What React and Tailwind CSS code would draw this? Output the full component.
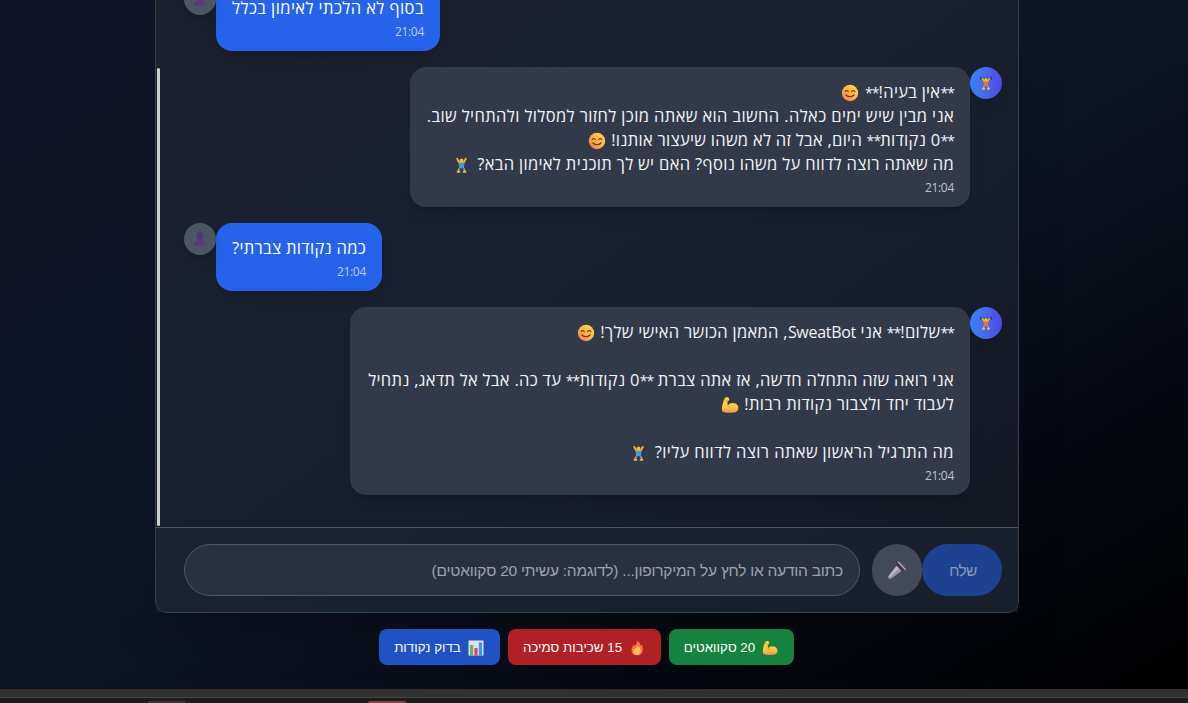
function Lifter({ shirt, className }) {
  return (
    <svg viewBox="0 0 20 20" className={className}>
      <path d="M2 3h16" stroke="#31333f" strokeWidth="1" />
      <path d="M2.5 1v4M17.5 1v4" stroke="#343644" strokeWidth="2" />
      <path d="M4.500 2.500l3 5.500h5l3-5.500" fill="none" stroke="#f6b51d" strokeWidth="2.200" />
      <circle cx="10" cy="5.200" r="2.300" fill="#f8bd2e" />
      <path d="M6.500 8h7l-.6 6.500H7.100z" fill={shirt} />
      <path d="M7.500 14.500l-1.500 3M12.500 14.500l1.500 3" stroke="#a3a7c4" strokeWidth="2" />
      <path d="M4.500 18.500h4M11.500 18.500h4" stroke="#f2b72f" strokeWidth="2.400" />
    </svg>
  )
}

function InlineLifter() {
  return <Lifter shirt="#429bdc" className="mr-[3px] inline-block size-[17px] align-[-3px]" />
}

function Smile() {
  return (
    <svg viewBox="0 0 18 18" className="mr-px inline-block size-[18px] align-[-4px]">
      <defs>
        <linearGradient id="face" x1="1" y1="0" x2="0" y2="1">
          <stop stopColor="#ffe04a" />
          <stop offset=".55" stopColor="#ffad3c" />
          <stop offset="1" stopColor="#ef6f62" />
        </linearGradient>
      </defs>
      <circle cx="9" cy="9" r="8.200" fill="url(#face)" />
      <path d="M4.200 7.500q1.500-2 3 0M10.800 7.500q1.500-2 3 0M5 11q4 3.500 8 0" fill="none" stroke="#59351f" strokeWidth="1.200" strokeLinecap="round" />
    </svg>
  )
}

function Muscle({ className }) {
  return (
    <svg viewBox="0 0 18 18" className={className}>
      <defs>
        <linearGradient id="arm" x1="0" y1="0" x2="0" y2="1">
          <stop stopColor="#ffd23e" />
          <stop offset=".65" stopColor="#ffc642" />
          <stop offset="1" stopColor="#f08d50" />
        </linearGradient>
      </defs>
      <path d="M3 3.200C4 1 7 .600 8 2.200c.500 1.200-.200 2.800-1.600 3.100l.4 4.200c.8-1.200 1.900-2 3.400-2.300C13 6.600 16 7.500 17 10c1 3.600-.5 6.200-4 6.500-4 .5-8 .7-11-.8C.200 14.500 1 11 1.500 8.500z" fill="url(#arm)" />
      <path d="M6.500 10q1.300 0 2.800 1.500M3.500 3.500l3 1.300" fill="none" stroke="#dc8436" strokeWidth=".8" />
    </svg>
  )
}

function Person() {
  return (
    <svg viewBox="0 0 16 16" className="size-4">
      <defs>
        <linearGradient id="bust" x1="0" y1="0" x2="1" y2="1">
          <stop stopColor="#47306d" />
          <stop offset="1" stopColor="#653b95" />
        </linearGradient>
      </defs>
      <path d="M8 1c2.300 0 3.600 1.700 3.600 4 0 1.800-.8 3.300-1.700 4 .1 1.300 1.300 1.700 2.600 2.100 1.500.5 2 1.600 2 3.400h-13c0-1.800.5-2.900 2-3.400C4.800 10.700 6 10.300 6.100 9c-.9-.7-1.700-2.200-1.700-4C4.400 2.700 5.700 1 8 1z" fill="url(#bust)" />
    </svg>
  )
}

function Mic() {
  return (
    <svg viewBox="0 0 20 20" className="size-5 opacity-85">
      <path d="M9.500 6l5 5L4 18.800l-2.700-.3.200-2.300z" fill="#aaa1ae" />
      <path d="M9.500 6l2.500 2.500L2.500 17.500l-1-1.300z" fill="#d6ced8" />
      <circle cx="14.800" cy="5.200" r="3.800" fill="#574768" />
      <path d="M9.800 2.800l7.500 8" stroke="#4c2a67" strokeWidth="3" />
      <path d="M11 1.800l7.500 8" stroke="#c4bdca" strokeWidth="1.300" />
    </svg>
  )
}

function Fire() {
  return (
    <svg viewBox="0 0 16 16" className="size-4">
      <path d="M8 .800c2.500 1.500 3.500 3 3.600 5 .6-.4.9-1 .9-1.600 1.200 2 1.600 3.900 1.400 6.100-.3 3-2.700 5-5.900 5s-5.300-1.800-5.500-4.800C2.400 7.700 4 6.500 4.500 4c.5.600.8 1.200.8 2C7.300 5 8.300 3 8 .800z" fill="#fa704a" />
      <path d="M8.500 5.500c2.300 2 3.700 4 3.300 6.300-.4 2-1.800 3.200-3.800 3.200-2.300 0-3.800-1.500-3.700-3.500C4.400 9 8 8.500 8.500 5.500z" fill="#ffc247" />
    </svg>
  )
}

function Chart() {
  return (
    <svg viewBox="0 0 16 16" className="size-4">
      <path d="M.5.500h15v15H.5z" fill="#e2e1e8" />
      <path d="M.5 5.500h15M.5 10.500h15M5.500.500v15M10.500.500v15" stroke="#c3c3d1" strokeWidth=".5" />
      <path d="M2 5h3v10.500H2z" fill="#5bbd55" />
      <path d="M6.500 8h3v7.500h-3z" fill="#dd3971" />
      <path d="M11 2.500h3v13h-3z" fill="#2e9ce4" />
    </svg>
  )
}

function Avatar({ bot }) {
  return bot ? (
    <div className="flex size-8 shrink-0 items-center justify-center rounded-full bg-linear-to-r from-[#3b82f6] to-[#4f46e5] shadow-lg">
      <Lifter shirt="#f56b2c" className="size-[14px]" />
    </div>
  ) : (
    <div className="flex size-8 shrink-0 items-center justify-center rounded-full bg-[#4b5563] shadow-lg">
      <Person />
    </div>
  )
}

function Message({ bot, className, children }) {
  return (
    <div className={bot ? 'flex justify-start' : 'flex justify-end'}>
      {bot && <Avatar bot />}
      <div className={`rounded-2xl px-4 pt-[13px] shadow-lg ${bot ? 'bg-[#323a4a] text-[#f3f4f6]' : 'bg-[#2563eb] text-white'} ${className}`}>
        <div className="text-[16.5px] leading-6 whitespace-nowrap">{children}</div>
        <div className={`mt-1 text-xs leading-4 tracking-[-0.3px] ${bot ? 'text-[#bfc2c8]' : 'text-[#bed0f9]'}`}>21:04</div>
      </div>
      {!bot && <Avatar />}
    </div>
  )
}

function Line({ className = 'tracking-[0.3px]', children }) {
  return <div className={`h-6 ${className}`}>{children}</div>
}

function Stars() {
  return <span className="text-[14px] tracking-[-0.9px]">**</span>
}

export default function App() {
  return (
    <div dir="rtl" className="flex h-[703px] w-[1188px] flex-col overflow-hidden bg-[#1d1b1c] font-['Open_Sans','Noto_Sans',sans-serif]">
      <main className="flex h-[689px] shrink-0 flex-col items-center bg-[linear-gradient(to_bottom_right,#111428_0%,#0e1628_45%,#0a101c_62%,#05070f_80%,#000_100%)] pr-[14px]">
        <section className="flex h-[613px] w-[864px] shrink-0 flex-col rounded-b-xl border-x border-b border-[#374151] bg-[linear-gradient(to_bottom_right,#1c1f2e_0%,#182130_40%,#161d2a_70%,#131821_100%)] shadow-2xl">
          <div className="flex h-[527px] shrink-0 overflow-hidden">
            <div className="flex min-w-0 grow flex-col justify-end gap-4 pr-4 pb-8 pl-6">
              <Message className="h-[68px] w-56">
                <Line className="tracking-[0.43px]">בסוף לא הלכתי לאימון בכלל</Line>
              </Message>
              <Message bot className="h-[140px] w-[560px]">
                <Line><Stars />אין בעיה!<Stars /> <Smile /></Line>
                <Line className="tracking-[0.38px]">אני מבין שיש ימים כאלה. החשוב הוא שאתה מוכן לחזור למסלול ולהתחיל שוב.</Line>
                <Line className="tracking-[0.29px]"><Stars />0 נקודות<Stars /> היום, אבל זה לא משהו שיעצור אותנו! <Smile /></Line>
                <Line className="tracking-[0.34px]">מה שאתה רוצה לדווח על משהו נוסף? האם יש לך תוכנית לאימון הבא? <InlineLifter /></Line>
              </Message>
              <Message className="h-[68px] w-[166px]">
                <Line>כמה נקודות צברתי?</Line>
              </Message>
              <Message bot className="h-[188px] w-[620px]">
                <Line><Stars />שלום!<Stars /> אני <span className="text-[16px] tracking-[-0.3px]">SweatBot</span>, המאמן הכושר האישי שלך! <Smile /></Line>
                <Line />
                <Line>אני רואה שזה התחלה חדשה, אז אתה צברת <Stars />0 נקודות<Stars /> עד כה. אבל אל תדאג, נתחיל</Line>
                <Line>לעבוד יחד ולצבור נקודות רבות! <Muscle className="mr-px inline-block size-[18px] align-[-4px]" /></Line>
                <Line />
                <Line className="tracking-[0.39px]">מה התרגיל הראשון שאתה רוצה לדווח עליו? <InlineLifter /></Line>
              </Message>
            </div>
            <div className="flex w-1 shrink-0 flex-col justify-end pb-px pl-px">
              <div className="h-[458px] rounded-full bg-[#d0d0d0]" />
            </div>
          </div>
          <div className="flex h-[85px] shrink-0 border-t border-[#4b5563] bg-[#1b2432]/60 pt-4 pr-4 pl-7 font-['Liberation_Sans',Arial,sans-serif]">
            <button className="h-[52px] w-20 rounded-full bg-[#1d4291] pt-0.5 pl-0.5 text-[15.5px] tracking-[-0.6px] text-[#8e96ab]">שלח</button>
            <button className="flex h-[52px] w-[50px] items-center justify-center rounded-full bg-[#424a57]"><Mic /></button>
            <div className="mr-3 flex h-[52px] w-[676px] items-center rounded-full border border-[#4b5563] bg-[#29313f] px-4 pt-0.5 text-[15.5px] tracking-[-0.23px] text-[#9ca3af]">
              כתוב הודעה או לחץ על המיקרופון... (לדוגמה: עשיתי 20 סקוואטים)
            </div>
          </div>
        </section>
        <nav className="mt-4 mr-0.5 flex gap-2 text-[13.33px] text-white font-['Liberation_Sans',Arial,sans-serif]">
          <button className="flex h-9 w-[125px] items-center justify-center gap-[7px] rounded-lg bg-[#15833f] pt-px"><Muscle className="size-4" />20 סקוואטים</button>
          <button className="flex h-9 w-[153px] items-center justify-center gap-[7px] rounded-lg bg-[#b12024] pt-px"><Fire />15 שכיבות סמיכה</button>
          <button className="flex h-9 w-[121px] items-center justify-center gap-[7px] rounded-lg bg-[#1f52c2] pt-px"><Chart />בדוק נקודות</button>
        </nav>
      </main>
      <footer dir="ltr" className="flex h-[14px] flex-col">
        <div className="h-[9px] border-b border-[#464646] bg-[#303030]" />
        <div className="flex h-[5px] items-end bg-[#1d1b1c]">
          <div className="ml-[148px] h-[2px] w-[38px] rounded-t bg-[#393536]" />
          <div className="ml-[182px] h-[2px] w-[38px] rounded-t bg-[#884348]" />
        </div>
      </footer>
    </div>
  )
}
